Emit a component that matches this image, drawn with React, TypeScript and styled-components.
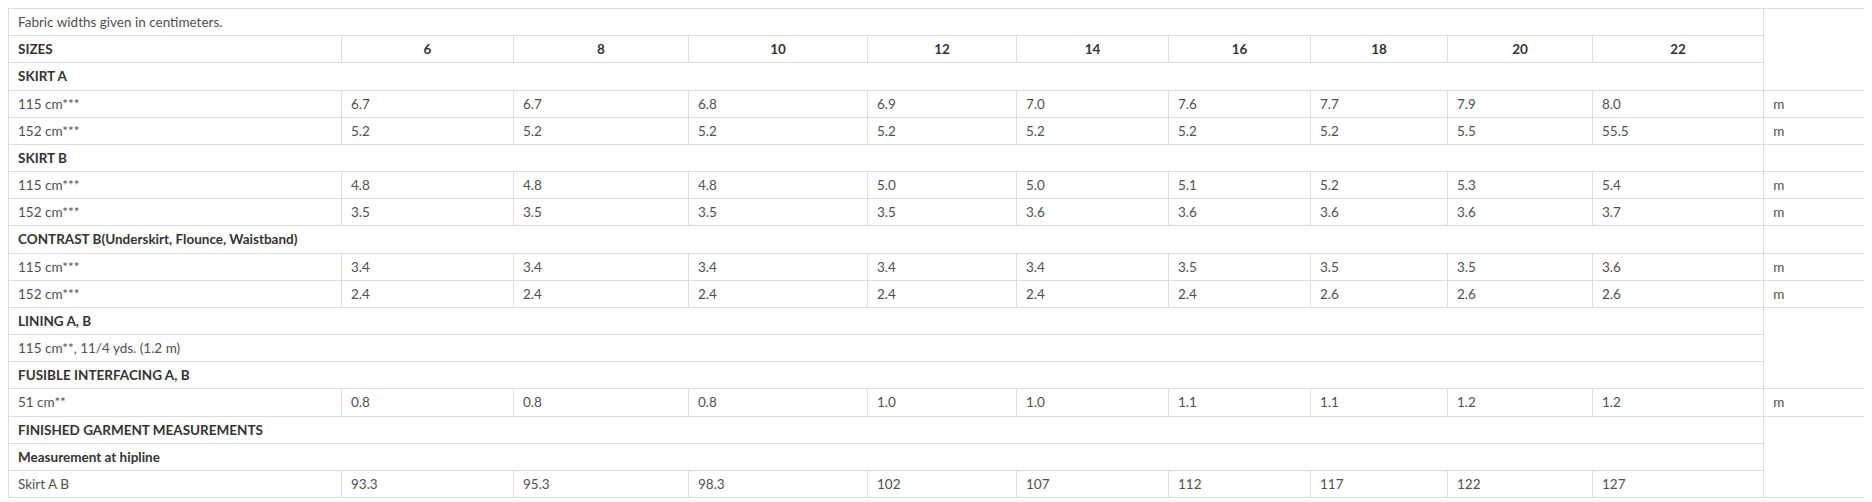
import React from "react";
import styled, { createGlobalStyle } from "styled-components";

type ValueRow = { label: string; values: string[]; unit?: string };

const GlobalStyle = createGlobalStyle`
  html, body {
    overflow: hidden;
  }
  body {
    margin: 8px;
    background: #ffffff;
    font-family: Lato, "Open Sans", Arial, sans-serif;
  }
`;

const widths = [333, 172, 175, 179, 149, 152, 142, 137, 145, 171, 130];
const sizes = ["6", "8", "10", "12", "14", "16", "18", "20", "22"];

const Table = styled.table`
  width: ${widths.reduce((a, b) => a + b, 0)}px;
  table-layout: fixed;
  border-collapse: collapse;
  font-size: 13.5px;
  color: #555555;
`;

const Cell = styled.td<{ $bold?: boolean; $center?: boolean }>`
  border: 1px solid #dddddd;
  padding: 4px 9px;
  line-height: 18.17px;
  text-align: ${(p) => (p.$center ? "center" : "left")};
  font-weight: ${(p) => (p.$bold ? 700 : 400)};
  color: ${(p) => (p.$bold ? "#333333" : "#505050")};
  vertical-align: middle;
  white-space: nowrap;
`;

const Row = styled.tr``;

const skirtA: ValueRow[] = [
  { label: "115 cm***", values: ["6.7", "6.7", "6.8", "6.9", "7.0", "7.6", "7.7", "7.9", "8.0"], unit: "m" },
  { label: "152 cm***", values: ["5.2", "5.2", "5.2", "5.2", "5.2", "5.2", "5.2", "5.5", "55.5"], unit: "m" },
];

const skirtB: ValueRow[] = [
  { label: "115 cm***", values: ["4.8", "4.8", "4.8", "5.0", "5.0", "5.1", "5.2", "5.3", "5.4"], unit: "m" },
  { label: "152 cm***", values: ["3.5", "3.5", "3.5", "3.5", "3.6", "3.6", "3.6", "3.6", "3.7"], unit: "m" },
];

const contrast: ValueRow[] = [
  { label: "115 cm***", values: ["3.4", "3.4", "3.4", "3.4", "3.4", "3.5", "3.5", "3.5", "3.6"], unit: "m" },
  { label: "152 cm***", values: ["2.4", "2.4", "2.4", "2.4", "2.4", "2.4", "2.6", "2.6", "2.6"], unit: "m" },
];

const interfacing: ValueRow = {
  label: "51 cm**",
  values: ["0.8", "0.8", "0.8", "1.0", "1.0", "1.1", "1.1", "1.2", "1.2"],
  unit: "m",
};

const hipline: ValueRow = {
  label: "Skirt A B",
  values: ["93.3", "95.3", "98.3", "102", "107", "112", "117", "122", "127"],
};

const Values = ({ row }: { row: ValueRow }) => (
  <Row>
    <Cell>{row.label}</Cell>
    {row.values.map((v, i) => (
      <Cell key={i}>{v}</Cell>
    ))}
    {row.unit ? <Cell>{row.unit}</Cell> : null}
  </Row>
);

const Section = ({
  children,
  bold = true,
  side,
}: {
  children: React.ReactNode;
  bold?: boolean;
  side?: number;
}) => (
  <Row>
    <Cell colSpan={10} $bold={bold}>
      {children}
    </Cell>
    {side ? <Cell rowSpan={side} /> : null}
  </Row>
);

const App = () => {
  return (
    <>
      <GlobalStyle />
      <Table>
        <colgroup>
          {widths.map((w, i) => (
            <col key={i} style={{ width: w }} />
          ))}
        </colgroup>
        <tbody>
          <Section bold={false} side={3}>
            Fabric widths given in centimeters.
          </Section>
          <Row>
            <Cell $bold>SIZES</Cell>
            {sizes.map((s) => (
              <Cell key={s} $bold $center>
                {s}
              </Cell>
            ))}
          </Row>
          <Section>SKIRT A</Section>
          {skirtA.map((r, i) => (
            <Values key={i} row={r} />
          ))}
          <Section side={1}>SKIRT B</Section>
          {skirtB.map((r, i) => (
            <Values key={i} row={r} />
          ))}
          <Section side={1}>CONTRAST B(Underskirt, Flounce, Waistband)</Section>
          {contrast.map((r, i) => (
            <Values key={i} row={r} />
          ))}
          <Section side={3}>LINING A, B</Section>
          <Section bold={false}>115 cm**, 11/4 yds. (1.2 m)</Section>
          <Section>FUSIBLE INTERFACING A, B</Section>
          <Values row={interfacing} />
          <Section side={3}>FINISHED GARMENT MEASUREMENTS</Section>
          <Section>Measurement at hipline</Section>
          <Values row={hipline} />
        </tbody>
      </Table>
    </>
  );
};

export default App;
